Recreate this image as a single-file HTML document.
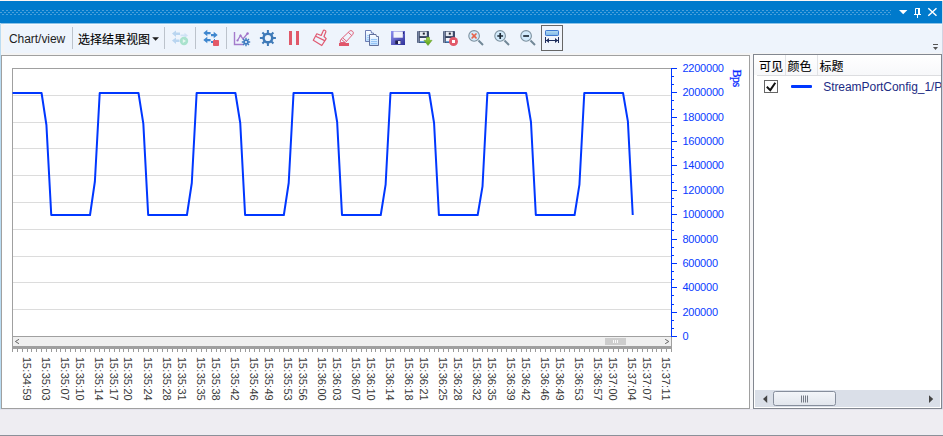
<!DOCTYPE html>
<html lang="zh-CN"><head><meta charset="utf-8"><title>Chart/view</title>
<style>
html,body{margin:0;padding:0;}
body{width:943px;height:436px;overflow:hidden;background:#eeedf2;position:relative;font-family:"Liberation Sans","Noto Sans CJK SC",sans-serif;font-size:12px;color:#1e1e1e;}
.abs{position:absolute;}
#top{left:0;top:0;width:943px;height:1px;background:#fdf6f4;}
#title{left:0;top:1px;width:942px;height:22px;background:#007acc;}
#redge{left:942px;top:1px;width:1px;height:408px;background:#d2d3e2;}
#strip{left:0;top:23px;width:942px;height:32px;background:#f4f4f4;}
#trans{left:0;top:23px;width:942px;height:1px;background:#8cc3e8;}
#trans2{left:4px;top:24px;width:938px;height:1px;background:#f7fafe;}
#toolbar{left:4px;top:24px;width:938px;height:29px;background:#eef4fc;border-radius:0 0 3px 3px;}
#ledge{left:0;top:23px;width:1px;height:386px;background:#b9dcf3;}
#chartpanel{left:1px;top:55px;width:747px;height:352px;background:#fff;border:1px solid #a0a0a0;}
#gap{left:750px;top:54px;width:3px;height:355px;background:#f6f6f8;}
#under{left:0;top:409px;width:943px;height:1px;background:#e4e3ec;}
#legend{left:753px;top:54px;width:187px;height:353px;background:#fff;border:1px solid #828790;overflow:hidden;}
#bottomline{left:0;top:435px;width:943px;height:1px;background:#8b9099;}
.tb{top:31px;height:16px;line-height:16px;white-space:nowrap;}
.sep{top:27px;width:1px;height:22px;background:#bcc3cc;}
svg text.yl{font-family:"Liberation Sans",sans-serif;font-size:11px;fill:#0a3cff;}
svg text.xl{font-family:"Liberation Sans",sans-serif;font-size:11px;fill:#3a3a3a;}
svg text.bps{font-family:"Liberation Serif",serif;font-size:12px;letter-spacing:-0.6px;fill:#0a2cff;stroke:#0a2cff;stroke-width:0.3px;}
.cjk{line-height:16px;white-space:nowrap;color:#000;-webkit-text-stroke:0.1px #000;}
</style></head>
<body>
<div id="top" class="abs"></div>
<div id="title" class="abs">
<svg class="abs" style="left:0;top:0" width="942" height="22" viewBox="0 0 942 22">
<defs><pattern id="dots" x="0" y="1" width="4" height="4" patternUnits="userSpaceOnUse">
<rect x="2" y="0" width="2" height="1" fill="#4ba0da"/><rect x="0" y="2" width="2" height="1" fill="#4ba0da"/></pattern></defs>
<rect x="0" y="9" width="891" height="5" fill="url(#dots)"/>
<path d="M899 9h8.4l-4.2 4.2z" fill="#fff"/>
<path d="M915.5 13.5v-6h3v6M914 13.5h7M917.5 14v3" fill="none" stroke="#fff"/>
<path d="M919 7v6.5" stroke="#fff" stroke-width="2"/>
<path d="M928.3 7.3l8.2 7.4M936.5 7.3l-8.2 7.4" stroke="#fff" stroke-width="1.5" fill="none"/>
</svg>
</div>
<div id="strip" class="abs"></div>
<div id="toolbar" class="abs"></div>
<div id="trans" class="abs"></div><div id="trans2" class="abs"></div>
<div id="ledge" class="abs"></div>
<div id="redge" class="abs"></div>
<div class="abs tb" style="left:9px;letter-spacing:-0.05px">Chart/view</div>
<div class="abs sep" style="left:72px"></div>
<div class="abs tb cjk" style="left:78px;top:31.5px">选择结果视图</div>
<svg class="abs" style="left:152px;top:36px" width="8" height="6"><path d="M0.2 1.3h6.8l-3.4 3.5z" fill="#1e1e1e"/></svg>
<div class="abs sep" style="left:164px"></div>
<div class="abs sep" style="left:195px"></div>
<div class="abs sep" style="left:226px"></div>
<svg class="abs" style="left:164px;top:24px" width="404" height="30" viewBox="164 24 404 30">
<defs>
<linearGradient id="gsave" x1="0" y1="0" x2="1" y2="1"><stop offset="0" stop-color="#8e90f0"/><stop offset="1" stop-color="#2e3098"/></linearGradient>
<linearGradient id="gdoc" x1="0" y1="0" x2="0" y2="1"><stop offset="0" stop-color="#ffffff"/><stop offset="1" stop-color="#b9dcff"/></linearGradient>
<linearGradient id="gfl" x1="0" y1="0" x2="1" y2="0"><stop offset="0" stop-color="#4a5876"/><stop offset="0.12" stop-color="#7b89a6"/><stop offset="0.22" stop-color="#33405c"/><stop offset="1" stop-color="#3e4b6c"/></linearGradient>
<linearGradient id="garr" x1="0" y1="0" x2="0" y2="1"><stop offset="0" stop-color="#a5d64a"/><stop offset="1" stop-color="#4f9a16"/></linearGradient>
<linearGradient id="gfit" x1="0" y1="0" x2="0" y2="1"><stop offset="0" stop-color="#b4dcf2"/><stop offset="1" stop-color="#7fb6e6"/></linearGradient>
</defs>
<!-- icon 1: faded arrows with play -->
<path d="M172 33.5l4-3v2h4v2.5h-4v2z" fill="#b9d5f0"/>
<path d="M172 40.5l4-3v2h3.5v2.5h-3.5v2z" fill="#b9d5f0"/>
<path d="M188 35.5l-3.5-2.7v1.7h-4v1.8h4v1.7z" fill="#cfe2f5"/>
<circle cx="184" cy="41" r="4.2" fill="#a9e2cd"/>
<path d="M182.8 39l3.2 2l-3.2 2z" fill="#e6f7f0"/>
<!-- icon 2 -->
<path d="M203.3 33l4-3.2v2.1h3.3v2.3h-3.3v2.1z" fill="#3f87cf"/>
<path d="M203.3 40l4-3.2v2.1h3.3v2.3h-3.3v2.1z" fill="#3f87cf"/>
<path d="M217.7 35l-4-3.2v2.1h-2.7v2.3h2.7v2.1z" fill="#3f87cf"/>
<rect x="211" y="41" width="2.5" height="2" fill="#3f87cf"/>
<rect x="214" y="39" width="1" height="1.5" fill="#3f87cf"/>
<rect x="213" y="40" width="6" height="6" rx="0.8" fill="#e35a68"/>
<!-- icon 3: chart with gear -->
<path d="M234.5 32v12.5h9" fill="none" stroke="#a47bcc" stroke-width="1.4"/>
<path d="M237.5 40.5l3-5l2.5 3.5l4.5-5.5" fill="none" stroke="#a47bcc" stroke-width="1.3"/>
<circle cx="237.5" cy="40.5" r="1.1" fill="#a070c8"/>
<circle cx="240.5" cy="35.5" r="1.1" fill="#a070c8"/>
<circle cx="247.6" cy="33.5" r="1.2" fill="#a070c8"/>
<g transform="translate(246,42)">
<circle r="2.6" fill="#3f7cc0"/>
<g stroke="#3f7cc0" stroke-width="1.4"><path d="M0 -4.2V4.2M-4.2 0H4.2M-3 -3L3 3M-3 3L3 -3"/></g>
<circle r="1.1" fill="#eef4fc"/>
</g>
<!-- icon 4: gear -->
<g transform="translate(267.9,38)">
<circle r="5.6" fill="#3f7ab8"/>
<g stroke="#3f7ab8" stroke-width="2"><path d="M0 -8V8M-8 0H8"/></g>
<g stroke="#3f7ab8" stroke-width="2"><path d="M-5.5 -5.5L5.5 5.5M-5.5 5.5L5.5 -5.5"/></g>
<circle r="3.1" fill="#eef4fc"/>
</g>
<!-- icon 5: pause -->
<rect x="289" y="31" width="3" height="14" fill="#e05869"/>
<rect x="296" y="31" width="3" height="14" fill="#e05869"/>
<!-- icon 6: brush -->
<g fill="none" stroke="#e05a72" stroke-width="1.2" stroke-linejoin="round">
<path d="M323 31.2a1.5 1.5 0 0 1 2.9 0.6l-1.9 4.7l2.2 2.2l-4.4 6.8l-8.5 -5.2l3.5 -6.5l4.4 1.7z"/>
<path d="M315.7 36.2l9.4 4.7"/>
</g>
<!-- icon 7: eraser/highlighter -->
<g fill="none" stroke="#e0607a" stroke-width="1" stroke-linejoin="round">
<path d="M349.3 31.4a2.2 2.2 0 0 1 3.4 3.1l-7.3 8h-5.2l0.3 -2.7z"/>
<path d="M341.2 39.2l3.8 3.2M342.7 37.9l3.8 3.3M348.2 32.3l3.6 3.2"/>
</g>
<rect x="339" y="43" width="10" height="3" fill="#e0566a"/>
<!-- icon 8: copy -->
<path d="M365.5 30.5h5.5l0.5 2.5h2v8.5h-8z" fill="url(#gdoc)" stroke="#6c7db4" stroke-width="1"/>
<path d="M367 35.5h2.5M367 37.5h2.5M367 39.5h2.5" stroke="#9cc8f8" stroke-width="0.9"/>
<path d="M369.5 34.5h6.5l0.5 2h2v9h-9z" fill="url(#gdoc)" stroke="#62709c" stroke-width="1"/>
<path d="M371 39.5h6M371 41.5h6M371 43.5h6" stroke="#8ec0f5" stroke-width="0.9"/>
<!-- icon 9: save -->
<rect x="391" y="31" width="14" height="14" fill="url(#gsave)"/>
<rect x="393.5" y="31.5" width="9.3" height="6.2" fill="#f3f4fb"/>
<rect x="403" y="32" width="1" height="2" fill="#26287a"/>
<rect x="395.3" y="40.5" width="5.4" height="3.5" fill="#20204a"/>
<rect x="398" y="41" width="2.5" height="3" fill="#e9ebf5"/>
<!-- icon 10: save + arrow -->
<rect x="417" y="31" width="12" height="12" rx="0.8" fill="url(#gfl)"/>
<rect x="419.8" y="31.6" width="7" height="4.5" fill="#e6eaf2"/>
<rect x="422.8" y="32.6" width="2" height="2" fill="#1c2230"/>
<rect x="419.8" y="38" width="7" height="4" fill="#f4f6fa"/>
<rect x="419.8" y="41.2" width="7" height="1.3" fill="#4a8fd6"/>
<path d="M426.5 37.3h3v3h2.6l-4.1 5.2l-4.1 -5.2h2.6z" fill="url(#garr)" stroke="#5a9a1e" stroke-width="0.5"/>
<!-- icon 11: save + stop -->
<rect x="443" y="31" width="12" height="12" rx="0.8" fill="url(#gfl)"/>
<rect x="445.8" y="31.6" width="7" height="4.5" fill="#e6eaf2"/>
<rect x="448.8" y="32.6" width="2" height="2" fill="#1c2230"/>
<rect x="445.8" y="38" width="7" height="4" fill="#f4f6fa"/>
<rect x="445.8" y="41.2" width="7" height="1.3" fill="#4a8fd6"/>
<circle cx="453.5" cy="41.5" r="4.5" fill="#e25a6a"/>
<rect x="452" y="40" width="3" height="3" fill="#ffffff"/>
<!-- icon 12: zoom reset -->
<path d="M478.5 40.5l4.5 4.5" stroke="#718797" stroke-width="2"/>
<circle cx="474.1" cy="35.9" r="5.3" fill="#d2eafb" stroke="#7d919f" stroke-width="1.1"/>
<path d="M472.2 34l3.8 3.8M476 34l-3.8 3.8" stroke="#e6634a" stroke-width="1.7" stroke-linecap="round"/>
<!-- icon 13: zoom in -->
<path d="M504.5 40.5l4.5 4.5" stroke="#718797" stroke-width="2"/>
<circle cx="500.1" cy="35.9" r="5.3" fill="#d2eafb" stroke="#7d919f" stroke-width="1.1"/>
<path d="M497.3 36h5.8M500.2 33.1v5.8" stroke="#1e2a36" stroke-width="1.7"/>
<!-- icon 14: zoom out -->
<path d="M530.5 40.5l4.5 4.5" stroke="#718797" stroke-width="2"/>
<circle cx="526.1" cy="35.9" r="5.3" fill="#d2eafb" stroke="#7d919f" stroke-width="1.1"/>
<path d="M523.2 36h5.8" stroke="#1e2a36" stroke-width="1.7"/>
<!-- icon 15: fit (selected) -->
<rect x="541.5" y="25.5" width="21" height="25" fill="#f0f4fb" stroke="#666666" stroke-width="1"/>
<rect x="545.5" y="30.5" width="13" height="5" rx="0.7" fill="url(#gfit)" stroke="#3e78d0" stroke-width="1"/>
<path d="M545.5 37v6M558.5 37v6M546 40.5h12" stroke="#1f2d5c" stroke-width="1" fill="none"/>
<path d="M546 40.5l3-2.5v5zM558 40.5l-3-2.5v5z" fill="#1f2d5c"/>
</svg>

<div id="chartpanel" class="abs"></div>
<div id="gap" class="abs"></div>
<div id="under" class="abs"></div>
<svg class="abs" style="left:0;top:0" width="750" height="436" viewBox="0 0 750 436">
<rect x="12.5" y="68.5" width="659" height="268" fill="#fff" stroke="#a0a0a0"/>
<line x1="13" y1="95.5" x2="671" y2="95.5" stroke="#dcdcdc"/>
<line x1="13" y1="122.5" x2="671" y2="122.5" stroke="#dcdcdc"/>
<line x1="13" y1="148.5" x2="671" y2="148.5" stroke="#dcdcdc"/>
<line x1="13" y1="175.5" x2="671" y2="175.5" stroke="#dcdcdc"/>
<line x1="13" y1="202.5" x2="671" y2="202.5" stroke="#dcdcdc"/>
<line x1="13" y1="229.5" x2="671" y2="229.5" stroke="#dcdcdc"/>
<line x1="13" y1="256.5" x2="671" y2="256.5" stroke="#dcdcdc"/>
<line x1="13" y1="282.5" x2="671" y2="282.5" stroke="#dcdcdc"/>
<line x1="13" y1="309.5" x2="671" y2="309.5" stroke="#dcdcdc"/>

<polyline points="12.5,93 41.57,93 46.42,125 51.26,215 90.03,215 94.88,181.5 99.72,93 138.49,93 143.33,123.6 148.18,215 186.94,215 191.79,183 196.63,93 235.4,93 240.24,123 245.09,215 283.85,215 288.7,183 293.54,93 332.31,93 337.15,122 342,215 380.76,215 385.61,184.7 390.46,93 429.22,93 434.07,123 438.91,215 477.68,215 482.52,186.3 487.37,93 526.13,93 530.98,122 535.82,215 574.59,215 579.43,184.7 584.28,93 623.04,93 627.89,121.3 632.74,215" fill="none" stroke="#0037ff" stroke-width="2" stroke-linejoin="round"/>
<line x1="671.5" y1="68" x2="671.5" y2="337" stroke="#0037ff"/>
<line x1="671" y1="336.5" x2="677" y2="336.5" stroke="#0037ff"/>
<text x="682.48" y="340" class="yl">0</text>
<line x1="671" y1="328.5" x2="674" y2="328.5" stroke="#0037ff"/>
<line x1="671" y1="320.5" x2="674" y2="320.5" stroke="#0037ff"/>
<line x1="671" y1="312.5" x2="677" y2="312.5" stroke="#0037ff"/>
<text x="682.48 688.36 694.24 700.12 706 711.88" y="316" class="yl">200000</text>
<line x1="671" y1="304.5" x2="674" y2="304.5" stroke="#0037ff"/>
<line x1="671" y1="295.5" x2="674" y2="295.5" stroke="#0037ff"/>
<line x1="671" y1="287.5" x2="677" y2="287.5" stroke="#0037ff"/>
<text x="682.48 688.36 694.24 700.12 706 711.88" y="291" class="yl">400000</text>
<line x1="671" y1="279.5" x2="674" y2="279.5" stroke="#0037ff"/>
<line x1="671" y1="271.5" x2="674" y2="271.5" stroke="#0037ff"/>
<line x1="671" y1="263.5" x2="677" y2="263.5" stroke="#0037ff"/>
<text x="682.48 688.36 694.24 700.12 706 711.88" y="267" class="yl">600000</text>
<line x1="671" y1="255.5" x2="674" y2="255.5" stroke="#0037ff"/>
<line x1="671" y1="247.5" x2="674" y2="247.5" stroke="#0037ff"/>
<line x1="671" y1="239.5" x2="677" y2="239.5" stroke="#0037ff"/>
<text x="682.48 688.36 694.24 700.12 706 711.88" y="243" class="yl">800000</text>
<line x1="671" y1="230.5" x2="674" y2="230.5" stroke="#0037ff"/>
<line x1="671" y1="222.5" x2="674" y2="222.5" stroke="#0037ff"/>
<line x1="671" y1="214.5" x2="677" y2="214.5" stroke="#0037ff"/>
<text x="682.48 688.36 694.24 700.12 706 711.88 717.76" y="218" class="yl">1000000</text>
<line x1="671" y1="206.5" x2="674" y2="206.5" stroke="#0037ff"/>
<line x1="671" y1="198.5" x2="674" y2="198.5" stroke="#0037ff"/>
<line x1="671" y1="190.5" x2="677" y2="190.5" stroke="#0037ff"/>
<text x="682.48 688.36 694.24 700.12 706 711.88 717.76" y="194" class="yl">1200000</text>
<line x1="671" y1="182.5" x2="674" y2="182.5" stroke="#0037ff"/>
<line x1="671" y1="174.5" x2="674" y2="174.5" stroke="#0037ff"/>
<line x1="671" y1="165.5" x2="677" y2="165.5" stroke="#0037ff"/>
<text x="682.48 688.36 694.24 700.12 706 711.88 717.76" y="169" class="yl">1400000</text>
<line x1="671" y1="157.5" x2="674" y2="157.5" stroke="#0037ff"/>
<line x1="671" y1="149.5" x2="674" y2="149.5" stroke="#0037ff"/>
<line x1="671" y1="141.5" x2="677" y2="141.5" stroke="#0037ff"/>
<text x="682.48 688.36 694.24 700.12 706 711.88 717.76" y="145" class="yl">1600000</text>
<line x1="671" y1="133.5" x2="674" y2="133.5" stroke="#0037ff"/>
<line x1="671" y1="125.5" x2="674" y2="125.5" stroke="#0037ff"/>
<line x1="671" y1="117.5" x2="677" y2="117.5" stroke="#0037ff"/>
<text x="682.48 688.36 694.24 700.12 706 711.88 717.76" y="121" class="yl">1800000</text>
<line x1="671" y1="109.5" x2="674" y2="109.5" stroke="#0037ff"/>
<line x1="671" y1="100.5" x2="674" y2="100.5" stroke="#0037ff"/>
<line x1="671" y1="92.5" x2="677" y2="92.5" stroke="#0037ff"/>
<text x="682.48 688.36 694.24 700.12 706 711.88 717.76" y="96" class="yl">2000000</text>
<line x1="671" y1="84.5" x2="674" y2="84.5" stroke="#0037ff"/>
<line x1="671" y1="76.5" x2="674" y2="76.5" stroke="#0037ff"/>
<line x1="671" y1="68.5" x2="677" y2="68.5" stroke="#0037ff"/>
<text x="682.48 688.36 694.24 700.12 706 711.88 717.76" y="72" class="yl">2200000</text>

<text class="bps" transform="translate(733,69.6) rotate(90)">Bps</text>
<rect x="12" y="337" width="660" height="9" fill="#f0f0f0"/>
<rect x="12" y="346" width="660" height="3" fill="#a0a0a0"/>
<rect x="12" y="337" width="1" height="10" fill="#a0a0a0"/>
<rect x="671" y="337" width="1" height="12" fill="#a0a0a0"/>
<rect x="605" y="338" width="21" height="7" fill="#cdcdcd"/>
<path d="M613.5 340v3M615.5 340v3M617.5 340v3" stroke="#fafafa"/>
<path d="M19 339.3l-3.6 2.2l3.6 2.2" fill="none" stroke="#666" stroke-width="1"/>
<path d="M665.2 339.3l3.6 2.2l-3.6 2.2" fill="none" stroke="#666" stroke-width="1"/>
<path d="M12.5 349v3M17.5 349v3M22.5 349v3M27.5 349v3M31.5 349v3M36.5 349v3M41.5 349v3M46.5 349v3M51.5 349v3M56.5 349v3M60.5 349v3M65.5 349v3M70.5 349v3M75.5 349v3M80.5 349v3M85.5 349v3M90.5 349v3M94.5 349v3M99.5 349v3M104.5 349v3M109.5 349v3M114.5 349v3M119.5 349v3M123.5 349v3M128.5 349v3M133.5 349v3M138.5 349v3M143.5 349v3M148.5 349v3M153.5 349v3M157.5 349v3M162.5 349v3M167.5 349v3M172.5 349v3M177.5 349v3M182.5 349v3M186.5 349v3M191.5 349v3M196.5 349v3M201.5 349v3M206.5 349v3M211.5 349v3M216.5 349v3M220.5 349v3M225.5 349v3M230.5 349v3M235.5 349v3M240.5 349v3M245.5 349v3M249.5 349v3M254.5 349v3M259.5 349v3M264.5 349v3M269.5 349v3M274.5 349v3M279.5 349v3M283.5 349v3M288.5 349v3M293.5 349v3M298.5 349v3M303.5 349v3M308.5 349v3M312.5 349v3M317.5 349v3M322.5 349v3M327.5 349v3M332.5 349v3M337.5 349v3M342.5 349v3M346.5 349v3M351.5 349v3M356.5 349v3M361.5 349v3M366.5 349v3M371.5 349v3M375.5 349v3M380.5 349v3M385.5 349v3M390.5 349v3M395.5 349v3M400.5 349v3M404.5 349v3M409.5 349v3M414.5 349v3M419.5 349v3M424.5 349v3M429.5 349v3M434.5 349v3M438.5 349v3M443.5 349v3M448.5 349v3M453.5 349v3M458.5 349v3M463.5 349v3M467.5 349v3M472.5 349v3M477.5 349v3M482.5 349v3M487.5 349v3M492.5 349v3M497.5 349v3M501.5 349v3M506.5 349v3M511.5 349v3M516.5 349v3M521.5 349v3M526.5 349v3M530.5 349v3M535.5 349v3M540.5 349v3M545.5 349v3M550.5 349v3M555.5 349v3M560.5 349v3M564.5 349v3M569.5 349v3M574.5 349v3M579.5 349v3M584.5 349v3M589.5 349v3M593.5 349v3M598.5 349v3M603.5 349v3M608.5 349v3M613.5 349v3M618.5 349v3M623.5 349v3M627.5 349v3M632.5 349v3M637.5 349v3M642.5 349v3M647.5 349v3M652.5 349v3M656.5 349v3M661.5 349v3M666.5 349v3M671.5 349v3" stroke="#9a9a9a" fill="none"/>

<text class="xl" transform="translate(22.54,357) rotate(90)" x="-0.08 5.87 12.32 15.71 21.66 28.12 31.51 37.46">15:34:59</text>
<text class="xl" transform="translate(41.92,357) rotate(90)" x="-0.08 5.87 12.32 15.71 21.66 28.12 31.51 37.46">15:35:03</text>
<text class="xl" transform="translate(61.3,357) rotate(90)" x="-0.08 5.87 12.32 15.71 21.66 28.12 31.51 37.46">15:35:07</text>
<text class="xl" transform="translate(75.84,357) rotate(90)" x="-0.08 5.87 12.32 15.71 21.66 28.12 31.51 37.46">15:35:10</text>
<text class="xl" transform="translate(95.22,357) rotate(90)" x="-0.08 5.87 12.32 15.71 21.66 28.12 31.51 37.46">15:35:14</text>
<text class="xl" transform="translate(109.76,357) rotate(90)" x="-0.08 5.87 12.32 15.71 21.66 28.12 31.51 37.46">15:35:17</text>
<text class="xl" transform="translate(124.29,357) rotate(90)" x="-0.08 5.87 12.32 15.71 21.66 28.12 31.51 37.46">15:35:20</text>
<text class="xl" transform="translate(143.68,357) rotate(90)" x="-0.08 5.87 12.32 15.71 21.66 28.12 31.51 37.46">15:35:24</text>
<text class="xl" transform="translate(163.06,357) rotate(90)" x="-0.08 5.87 12.32 15.71 21.66 28.12 31.51 37.46">15:35:28</text>
<text class="xl" transform="translate(177.6,357) rotate(90)" x="-0.08 5.87 12.32 15.71 21.66 28.12 31.51 37.46">15:35:31</text>
<text class="xl" transform="translate(196.98,357) rotate(90)" x="-0.08 5.87 12.32 15.71 21.66 28.12 31.51 37.46">15:35:35</text>
<text class="xl" transform="translate(211.51,357) rotate(90)" x="-0.08 5.87 12.32 15.71 21.66 28.12 31.51 37.46">15:35:38</text>
<text class="xl" transform="translate(230.9,357) rotate(90)" x="-0.08 5.87 12.32 15.71 21.66 28.12 31.51 37.46">15:35:42</text>
<text class="xl" transform="translate(250.28,357) rotate(90)" x="-0.08 5.87 12.32 15.71 21.66 28.12 31.51 37.46">15:35:46</text>
<text class="xl" transform="translate(264.82,357) rotate(90)" x="-0.08 5.87 12.32 15.71 21.66 28.12 31.51 37.46">15:35:49</text>
<text class="xl" transform="translate(284.2,357) rotate(90)" x="-0.08 5.87 12.32 15.71 21.66 28.12 31.51 37.46">15:35:53</text>
<text class="xl" transform="translate(298.74,357) rotate(90)" x="-0.08 5.87 12.32 15.71 21.66 28.12 31.51 37.46">15:35:56</text>
<text class="xl" transform="translate(318.12,357) rotate(90)" x="-0.08 5.87 12.32 15.71 21.66 28.12 31.51 37.46">15:36:00</text>
<text class="xl" transform="translate(332.65,357) rotate(90)" x="-0.08 5.87 12.32 15.71 21.66 28.12 31.51 37.46">15:36:03</text>
<text class="xl" transform="translate(352.04,357) rotate(90)" x="-0.08 5.87 12.32 15.71 21.66 28.12 31.51 37.46">15:36:07</text>
<text class="xl" transform="translate(366.57,357) rotate(90)" x="-0.08 5.87 12.32 15.71 21.66 28.12 31.51 37.46">15:36:10</text>
<text class="xl" transform="translate(385.96,357) rotate(90)" x="-0.08 5.87 12.32 15.71 21.66 28.12 31.51 37.46">15:36:14</text>
<text class="xl" transform="translate(405.34,357) rotate(90)" x="-0.08 5.87 12.32 15.71 21.66 28.12 31.51 37.46">15:36:18</text>
<text class="xl" transform="translate(419.88,357) rotate(90)" x="-0.08 5.87 12.32 15.71 21.66 28.12 31.51 37.46">15:36:21</text>
<text class="xl" transform="translate(439.26,357) rotate(90)" x="-0.08 5.87 12.32 15.71 21.66 28.12 31.51 37.46">15:36:25</text>
<text class="xl" transform="translate(453.79,357) rotate(90)" x="-0.08 5.87 12.32 15.71 21.66 28.12 31.51 37.46">15:36:28</text>
<text class="xl" transform="translate(473.18,357) rotate(90)" x="-0.08 5.87 12.32 15.71 21.66 28.12 31.51 37.46">15:36:32</text>
<text class="xl" transform="translate(487.71,357) rotate(90)" x="-0.08 5.87 12.32 15.71 21.66 28.12 31.51 37.46">15:36:35</text>
<text class="xl" transform="translate(507.1,357) rotate(90)" x="-0.08 5.87 12.32 15.71 21.66 28.12 31.51 37.46">15:36:39</text>
<text class="xl" transform="translate(521.63,357) rotate(90)" x="-0.08 5.87 12.32 15.71 21.66 28.12 31.51 37.46">15:36:42</text>
<text class="xl" transform="translate(541.01,357) rotate(90)" x="-0.08 5.87 12.32 15.71 21.66 28.12 31.51 37.46">15:36:46</text>
<text class="xl" transform="translate(555.55,357) rotate(90)" x="-0.08 5.87 12.32 15.71 21.66 28.12 31.51 37.46">15:36:49</text>
<text class="xl" transform="translate(574.93,357) rotate(90)" x="-0.08 5.87 12.32 15.71 21.66 28.12 31.51 37.46">15:36:53</text>
<text class="xl" transform="translate(594.32,357) rotate(90)" x="-0.08 5.87 12.32 15.71 21.66 28.12 31.51 37.46">15:36:57</text>
<text class="xl" transform="translate(608.85,357) rotate(90)" x="-0.08 5.87 12.32 15.71 21.66 28.12 31.51 37.46">15:37:00</text>
<text class="xl" transform="translate(628.24,357) rotate(90)" x="-0.08 5.87 12.32 15.71 21.66 28.12 31.51 37.46">15:37:04</text>
<text class="xl" transform="translate(642.77,357) rotate(90)" x="-0.08 5.87 12.32 15.71 21.66 28.12 31.51 37.46">15:37:07</text>
<text class="xl" transform="translate(662.15,357) rotate(90)" x="-0.08 5.87 12.32 15.71 21.66 28.12 31.51 37.46">15:37:11</text>

</svg>
<div id="legend" class="abs">
<div class="abs" style="left:0;top:0;width:187px;height:20px;background:linear-gradient(#fff,#f7f8fa);"></div>
<div class="abs" style="left:3px;top:20px;width:184px;height:1px;background:#dcdde0;"></div>
<div class="abs" style="left:31px;top:0;width:1px;height:20px;background:#e2e3e6;"></div>
<div class="abs" style="left:63px;top:0;width:1px;height:20px;background:#e2e3e6;"></div>
<div class="abs cjk" style="left:5px;top:4px;">可见</div>
<div class="abs cjk" style="left:33.6px;top:4px;">颜色</div>
<div class="abs cjk" style="left:65.5px;top:4px;">标题</div>
<div class="abs" style="left:10px;top:25px;width:12px;height:11px;border:1px solid #666;background:#fff;"></div>
<svg class="abs" style="left:10px;top:25px" width="14" height="13"><path d="M2.8 6.7l3.5 3.4l5-7.4" fill="none" stroke="#111" stroke-width="2"/></svg>
<div class="abs" style="left:37px;top:30px;width:21px;height:3px;background:#0037ff;border-radius:1px;"></div>
<div class="abs" style="left:69.2px;top:24px;line-height:16px;color:#1c2c84;white-space:nowrap;letter-spacing:-0.05px">StreamPortConfig_1/P</div>
<div class="abs" style="left:1px;top:335px;width:185px;height:17px;background:#dadfe8;"></div>
<div class="abs" style="left:19px;top:336px;width:61px;height:13px;border:1px solid #868e9c;border-radius:2.5px;background:linear-gradient(#f3f5f9,#e2e6ed);"></div>
<svg class="abs" style="left:0;top:335px" width="187" height="17">
<path d="M13.2 5.2v7.8l-4.2-3.9z M175 5.2v7.8l4.2-3.9z" fill="#444"/>
<path d="M47.5 5.5v7M49.5 5.5v7M51.5 5.5v7M53.5 5.5v7" stroke="#757b86"/>
</svg>
</div>
<svg class="abs" style="left:930px;top:42px" width="12" height="10"><path d="M3 2.5h5" stroke="#555"/><path d="M3 5h5l-2.5 3z" fill="#555"/></svg>
<div id="bottomline" class="abs"></div>
</body></html>
